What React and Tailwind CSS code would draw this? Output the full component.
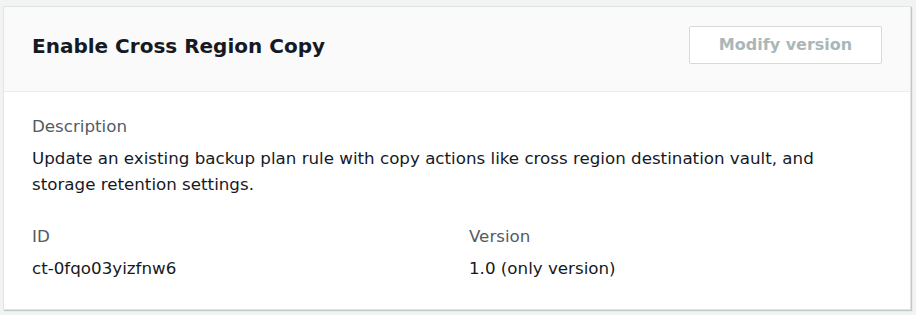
import React from 'react';

// Detail card for a document version
const Field = ({ label, children }) => (
  <div>
    <div className="text-[16.7px] leading-[26px] text-[#545b64]">{label}</div>
    <div className="mt-[6px] text-[16.7px] leading-[26px] text-[#16191f]">{children}</div>
  </div>
);

const App = () => {
  return (
    <div className="min-h-screen bg-[#f2f3f3] pl-[3px] pr-[5px] pt-[6px] pb-[5px]" style={{ fontFamily: '"DejaVu Sans", Verdana, sans-serif' }}>
      <div className="bg-white border border-[#e1e4e4] shadow-[1px_1px_1px_0_rgba(0,28,36,0.2)]">
        {/* Header */}
        <div className="bg-[#fafafa] border-b border-[#eaeded] flex items-center justify-between pl-[28px] pr-[28px] pt-[19px] pb-[27px]">
          <h2 className="pt-[2px] text-[20px] font-bold text-[#16191f]">Enable Cross Region Copy</h2>
          <button className="w-[193px] h-[38px] bg-white border border-[#d5dbdb] rounded-[2px] text-[16px] font-bold text-[#aab7b8]">
            Modify version
          </button>
        </div>

        {/* Body */}
        <div className="pl-[28px] pr-[28px] pt-[21px] pb-[28px]">
          <Field label="Description">
            Update an existing backup plan rule with copy actions like cross region destination vault, and storage retention settings.
          </Field>
          <div className="grid grid-cols-2 gap-6 mt-[26px]">
            <Field label="ID">ct-0fqo03yizfnw6</Field>
            <Field label="Version">1.0 (only version)</Field>
          </div>
        </div>
      </div>
    </div>
  );
};

export default App;
